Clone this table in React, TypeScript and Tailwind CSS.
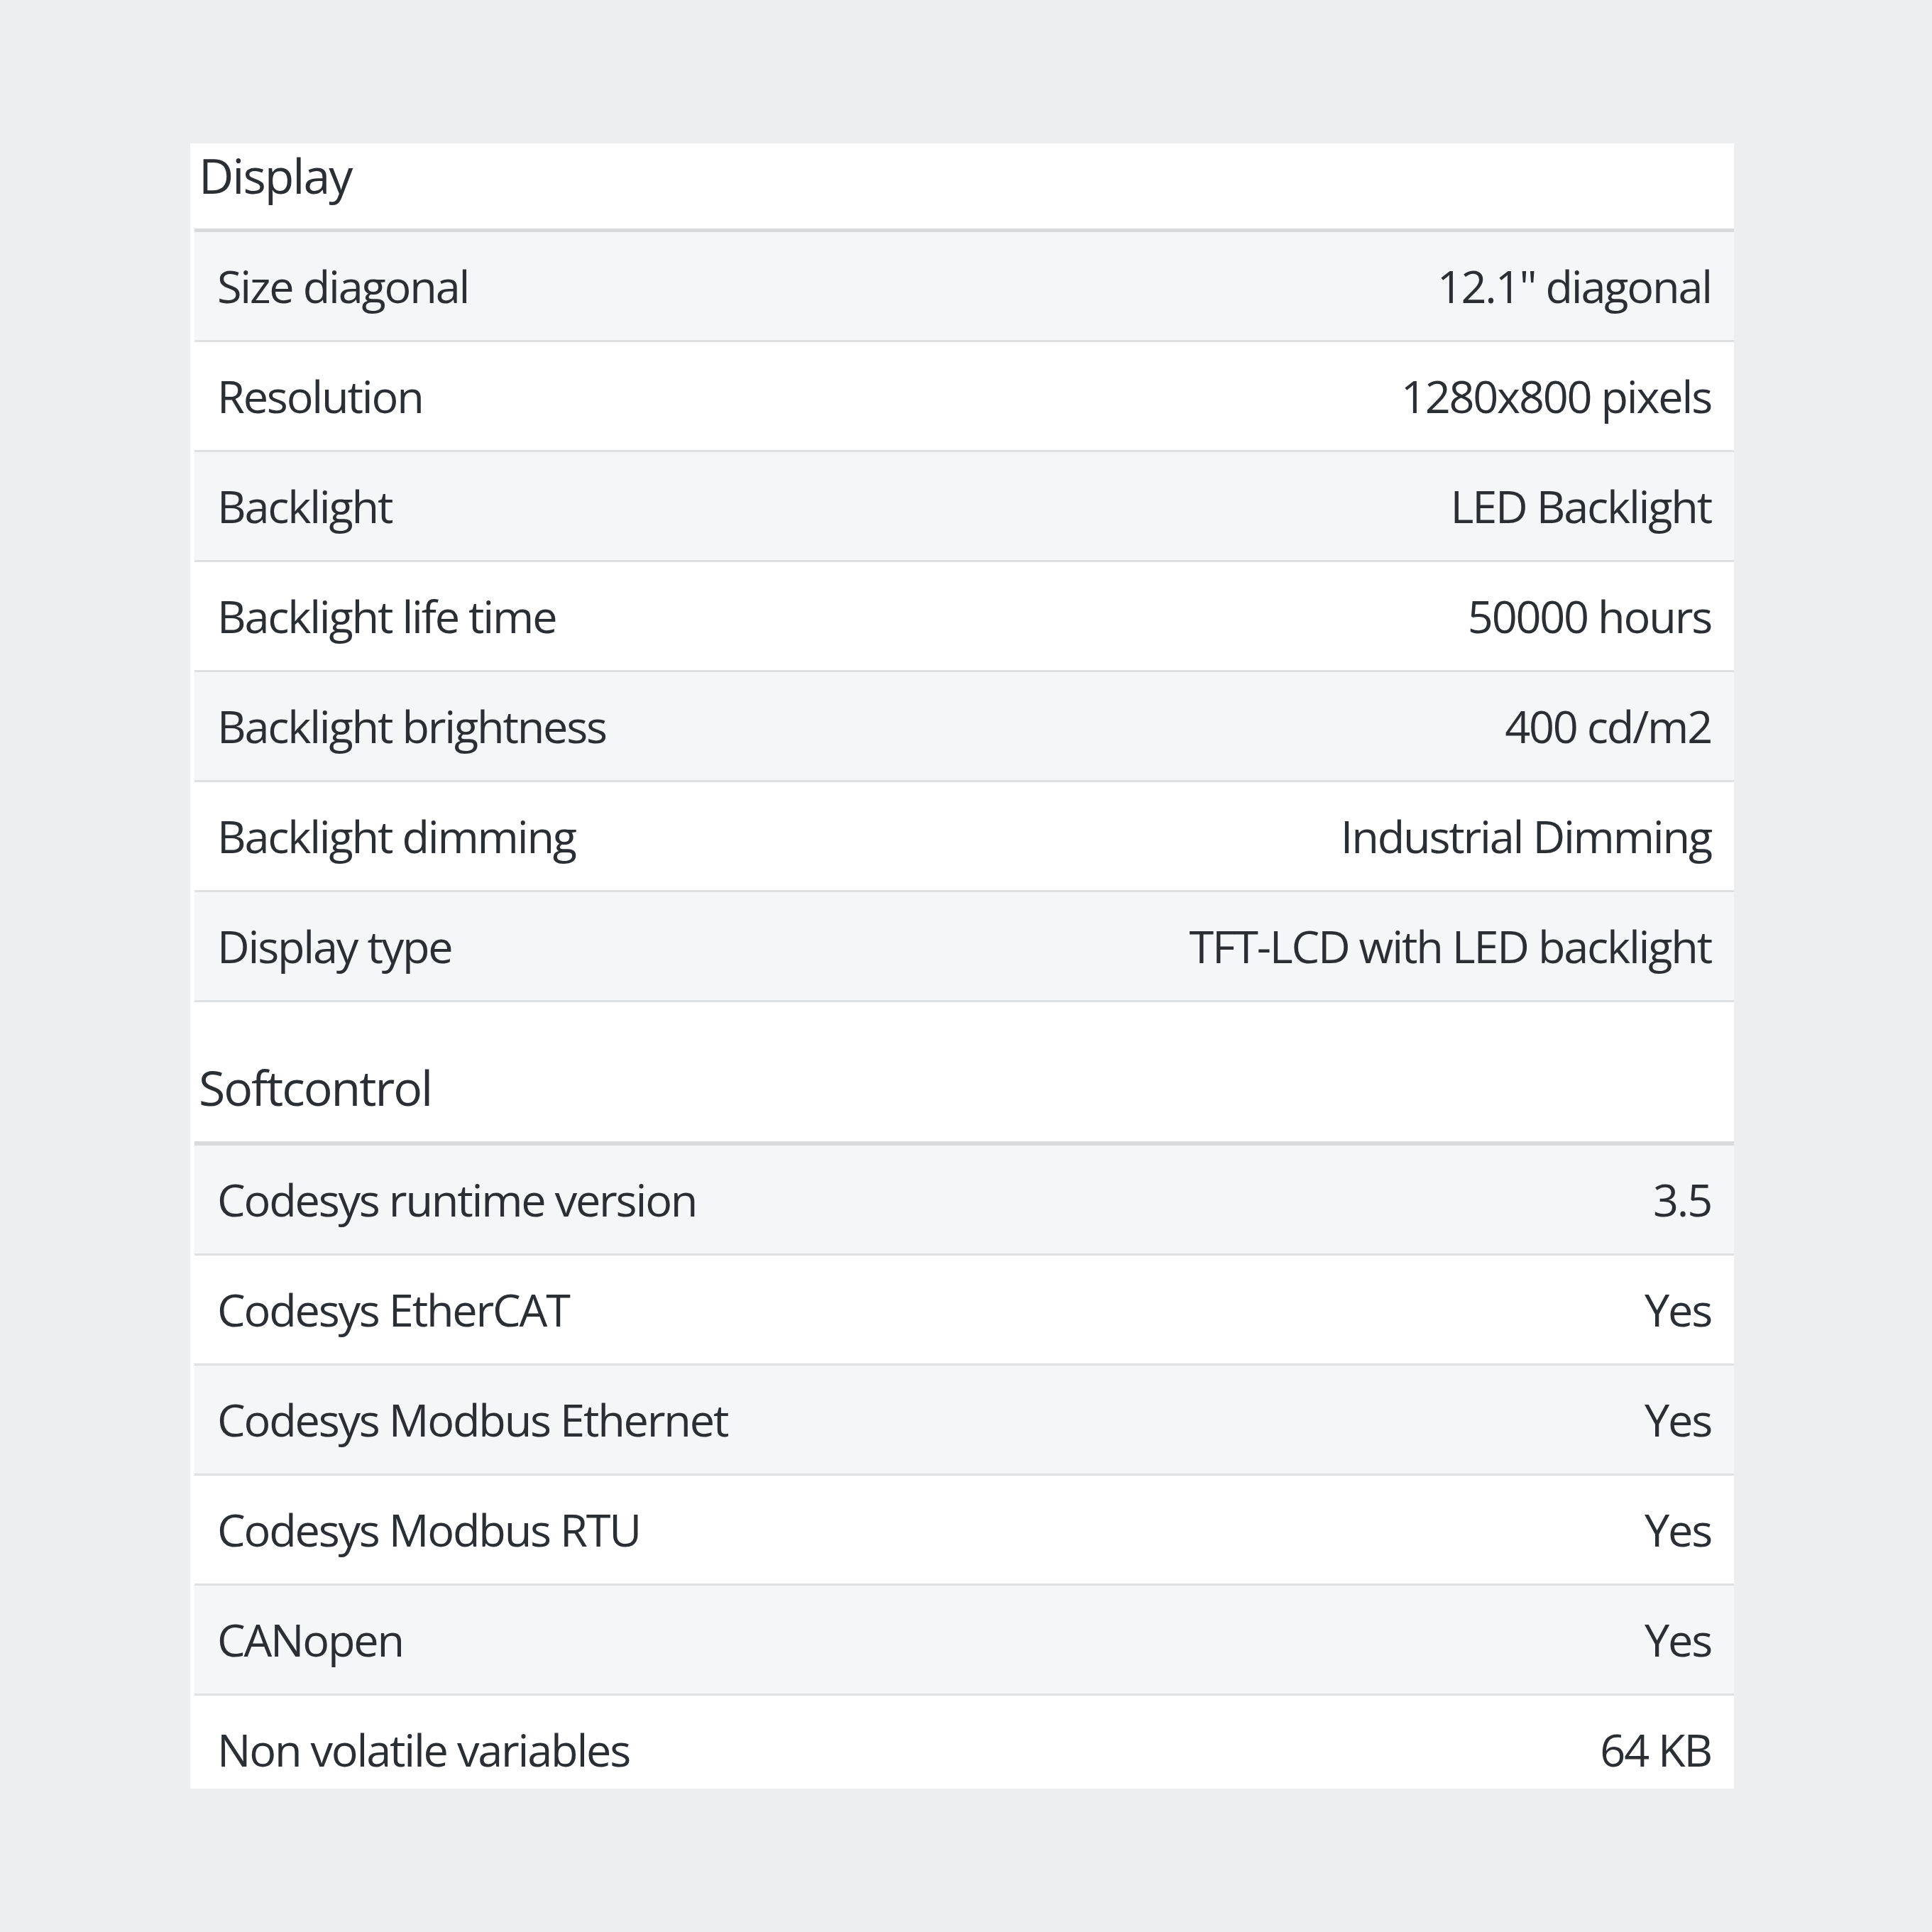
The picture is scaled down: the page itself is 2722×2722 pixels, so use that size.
import React from "react";

const display: [string, string][] = [
  ["Size diagonal", '12.1" diagonal'],
  ["Resolution", "1280x800 pixels"],
  ["Backlight", "LED Backlight"],
  ["Backlight life time", "50000 hours"],
  ["Backlight brightness", "400 cd/m2"],
  ["Backlight dimming", "Industrial Dimming"],
  ["Display type", "TFT-LCD with LED backlight"],
];

const soft: [string, string][] = [
  ["Codesys runtime version", "3.5"],
  ["Codesys EtherCAT", "Yes"],
  ["Codesys Modbus Ethernet", "Yes"],
  ["Codesys Modbus RTU", "Yes"],
  ["CANopen", "Yes"],
  ["Non volatile variables", "64 KB"],
];

function Row({ label, value, shaded }: { label: string; value: string; shaded: boolean }) {
  return (
    <div
      className={
        shaded
          ? "flex h-[155px] shrink-0 items-center justify-between border-b-[3px] border-[#dfe0e2] bg-[#f5f6f8] px-[32px]"
          : "flex h-[155px] shrink-0 items-center justify-between border-b-[3px] border-[#dfe0e2] bg-white px-[32px]"
      }
    >
      <span className="text-[63px] leading-[1.3] tracking-[-0.035em]">{label}</span>
      <span className="text-[63px] leading-[1.3] tracking-[-0.035em]">{value}</span>
    </div>
  );
}

export default function App() {
  return (
    <div className="flex h-[2722px] w-[2722px] items-start bg-[#eceef0] pl-[268px] pt-[202px] font-['Open_Sans',sans-serif] text-[#2b2e33]">
      <div className="w-[2175px] bg-white pl-[6px]">
        <div className="flex h-[125px] items-end border-b-[5px] border-[#d9dadc] pb-[33px] pl-[6px]">
          <span className="text-[68px] leading-[1.25] tracking-[-0.03em]">Display</span>
        </div>
        {display.map(([l, v], i) => (
          <Row key={l} label={l} value={v} shaded={i % 2 === 0} />
        ))}
        <div className="flex h-[202px] items-end border-b-[6px] border-[#d9dadc] pb-[34px] pl-[6px]">
          <span className="text-[68px] leading-[1.25] tracking-[-0.03em]">Softcontrol</span>
        </div>
        <div className="flex h-[906px] flex-col overflow-hidden">
          {soft.map(([l, v], i) => (
            <Row key={l} label={l} value={v} shaded={i % 2 === 0} />
          ))}
        </div>
      </div>
    </div>
  );
}
